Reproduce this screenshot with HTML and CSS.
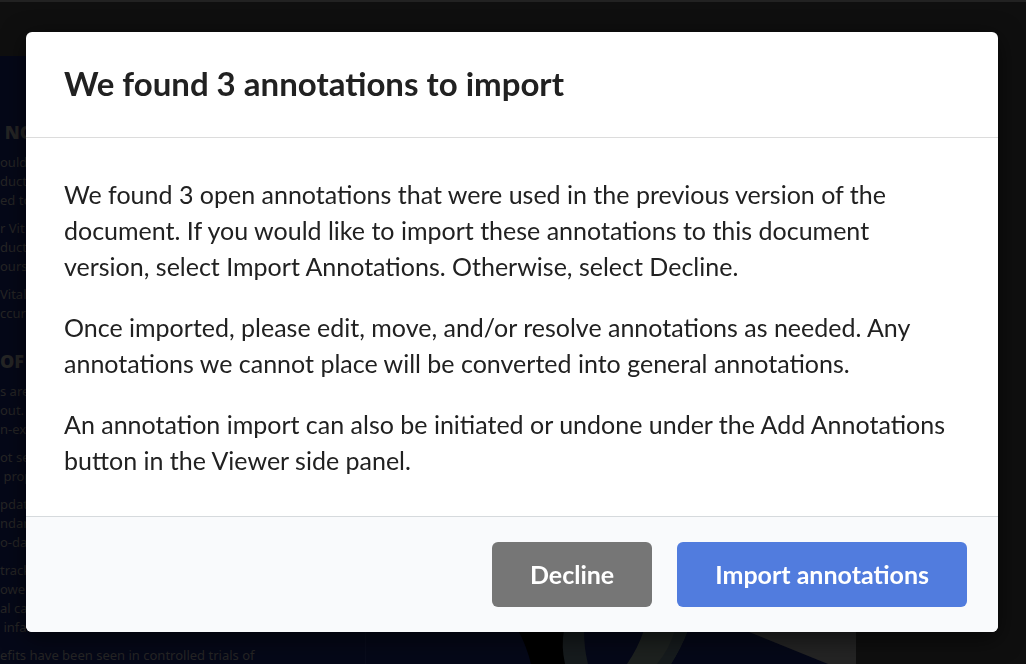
FILE: index.html
```html
<!DOCTYPE html>
<html lang="en">
<head>
    <meta charset="UTF-8">
    <meta name="viewport" content="width=device-width, initial-scale=1.0">
    <title>Import annotations</title>
    <link rel="stylesheet" href="styles.css">
</head>
<body>

<!-- Document viewer behind the dialog -->
<div class="viewer" aria-hidden="true">
    <div class="page">
        <div class="page-text">
            <h3>&nbsp;NO</h3>
            <p>ould<br>ducts<br>ed to</p>
            <p>r Vit<br>duct<br>ourse</p>
            <p>Vitali<br>ccurs</p>
            <h3>OF</h3>
            <p>s are<br>out.<br>n-exc</p>
            <p>ot sel<br>&nbsp;prop</p>
            <p>pdat<br>ndar<br>o-da</p>
            <p>track<br>ower<br>al ca<br>&nbsp;infarctions.</p>
            <p>efits have been seen in controlled trials of</p>
        </div>
        <svg class="page-art" viewBox="0 0 490 34" preserveAspectRatio="xMaxYMax slice">
            <path fill="#000" d="M152 0 Q161 17 165 34 H200 V0 Z"/>
            <path fill="#161b1d" d="M198 0 H218 Q218 18 222 34 H199 Q195 16 198 0 Z"/>
            <path fill="#1d211f" d="M278 0 H322 Q315 18 305 34 H261 Q272 18 278 0 Z"/>
            <path fill="#161b1d" d="M309 0 H322 Q315 18 305 34 H291 Q304 18 309 0 Z"/>
            <path fill="#242424" d="M378 0 H490 V34 H462 Z"/>
        </svg>
    </div>
</div>

<div class="overlay">
    <div class="modal" role="dialog" aria-modal="true" aria-labelledby="modalTitle">
        <div class="modal-header">
            <h1 id="modalTitle">We found 3 annotations to import</h1>
        </div>
        <div class="modal-body">
            <p>We found 3 open annotations that were used in the previous version of the document. If you would like to import these annotations to this document version, select Import Annotations. Otherwise, select Decline.</p>
            <p>Once imported, please edit, move, and/or resolve annotations as needed. Any annotations we cannot place will be converted into general annotations.</p>
            <p>An annotation import can also be initiated or undone under the Add Annotations button in the Viewer side panel.</p>
        </div>
        <div class="modal-footer">
            <button type="button" class="btn btn-decline">Decline</button>
            <button type="button" class="btn btn-import">Import annotations</button>
        </div>
    </div>
</div>

</body>
</html>
```

FILE: styles.css
```css
* {
    box-sizing: border-box;
}
body {
    margin: 0;
    font-family: Lato, "Open Sans", sans-serif;
    color: #212121;
    background-color: #0f0f0f;
}

/* Viewer */
.viewer {
    position: fixed;
    inset: 0;
    overflow: hidden;
    padding: 54px 170px 0 0;
    border-top: 2px solid #222;
}
.page {
    display: flex;
    height: 100%;
    background-color: #050818;
    color: #252525;
    font-family: "Noto Sans", sans-serif;
    font-size: 13px;
    line-height: 19px;
    white-space: nowrap;
}
.page-text {
    flex: 0 0 366px;
    padding-top: 64px;
    border-right: 1px solid #090c1c;
}
.page-text h3 {
    margin: 0 0 9px;
    font-family: "Open Sans", sans-serif;
    font-size: 18px;
    font-weight: 800;
    line-height: 24px;
}
.page-text p {
    margin: 0 0 9px;
}
.page-text p + h3 {
    margin-top: 26px;
}
.page-art {
    flex: 1;
    align-self: flex-end;
    height: 34px;
    min-width: 0;
}

/* Dialog */
.overlay {
    position: relative;
    padding: 32px 28px 32px 26px;
}
.modal {
    border-radius: 6px;
    overflow: hidden;
    background-color: #fff;
    box-shadow: 0 6px 24px rgba(0, 0, 0, 0.6);
}
.modal-header {
    padding: 31px 38px 33px;
    border-bottom: 1px solid #dcdcdc;
}
.modal-header h1 {
    margin: 0;
    font-size: 33px;
    font-weight: 700;
    line-height: 41px;
}
.modal-body {
    padding: 38px;
    font-size: 25px;
    line-height: 36px;
}
.modal-body p {
    margin: 0 0 25px;
}
.modal-body p:last-child {
    margin-bottom: 0;
}
.modal-footer {
    display: flex;
    justify-content: flex-end;
    gap: 25px;
    padding: 25px 31px;
    border-top: 1px solid #d6dadd;
    background-color: #f9fafc;
}
.btn {
    padding: 16px 38px;
    border: none;
    border-radius: 6px;
    font-family: inherit;
    font-size: 25px;
    font-weight: 700;
    line-height: 33px;
    color: #fff;
    cursor: pointer;
}
.btn-decline {
    background-color: #767676;
}
.btn-import {
    background-color: #517cde;
}
```
